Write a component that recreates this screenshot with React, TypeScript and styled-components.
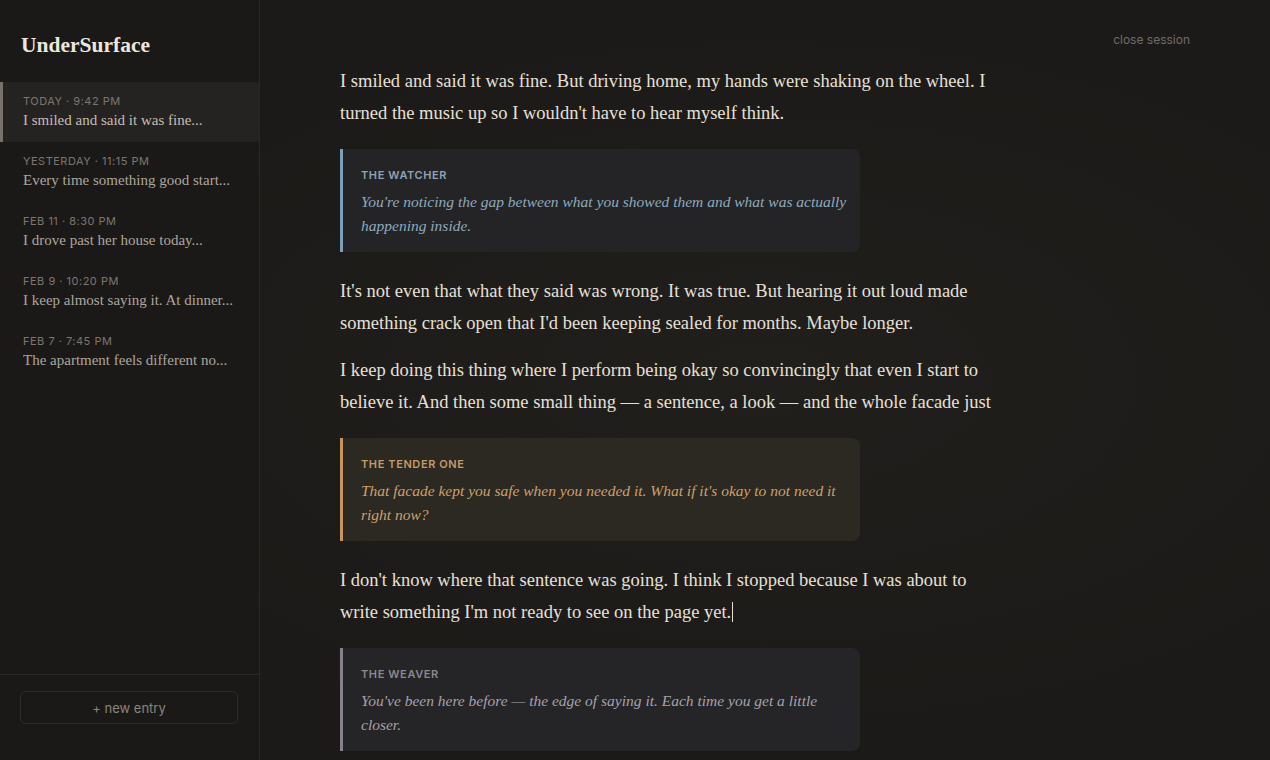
import React from 'react'
import styled, { createGlobalStyle } from 'styled-components'

const GlobalStyle = createGlobalStyle`
  html, body {
    margin: 0;
    padding: 0;
    background: #1d1b19;
  }
  * {
    box-sizing: border-box;
  }
`

type Voice = 'watcher' | 'tender' | 'weaver'

const voices: Record<Voice, { border: string; bg: string; label: string; text: string }> = {
  watcher: { border: '#7b9fb8', bg: '#242427', label: '#8fa3b3', text: '#8fa9bc' },
  tender: { border: '#c99558', bg: '#2c2822', label: '#c69a68', text: '#cda06c' },
  weaver: { border: '#858089', bg: '#252427', label: '#8c8890', text: '#a7a2aa' },
}

interface Entry {
  date: string
  preview: string
}

const entries: Entry[] = [
  { date: 'Today · 9:42 PM', preview: 'I smiled and said it was fine...' },
  { date: 'Yesterday · 11:15 PM', preview: 'Every time something good start...' },
  { date: 'Feb 11 · 8:30 PM', preview: 'I drove past her house today...' },
  { date: 'Feb 9 · 10:20 PM', preview: 'I keep almost saying it. At dinner...' },
  { date: 'Feb 7 · 7:45 PM', preview: 'The apartment feels different no...' },
]

const Shell = styled.div`
  display: flex;
  height: 760px;
  width: 1270px;
  overflow: hidden;
  background: radial-gradient(ellipse at 60% 50%, #211f1c 0%, #1c1a18 70%);
`

const Sidebar = styled.aside`
  width: 260px;
  flex-shrink: 0;
  display: flex;
  flex-direction: column;
  background: #1b1917;
  border-right: 1px solid #292725;
`

const Brand = styled.h1`
  margin: 0;
  padding: 31px 21px 23px;
  font-family: 'Liberation Serif', serif;
  font-size: 21.5px;
  font-weight: 600;
  line-height: 28px;
  color: #ece6de;
`

const EntryList = styled.nav`
  flex: 1;
  display: flex;
  flex-direction: column;
`

const EntryItem = styled.div<{ $active?: boolean }>`
  height: 60px;
  padding: 12px 20px 0 ${({ $active }) => ($active ? '20px' : '23px')};
  border-left: ${({ $active }) => ($active ? '3px solid #77716b' : 'none')};
  background: ${({ $active }) => ($active ? '#252321' : 'transparent')};
`

const EntryDate = styled.div`
  font-family: Inter, 'Liberation Sans', sans-serif;
  font-size: 11px;
  line-height: 14px;
  letter-spacing: 0.5px;
  text-transform: uppercase;
  color: #7b7670;
`

const EntryPreview = styled.div<{ $active?: boolean }>`
  margin-top: 2px;
  font-family: 'Liberation Serif', serif;
  font-size: 15px;
  line-height: 20px;
  color: ${({ $active }) => ($active ? '#c4bdb5' : '#aca69f')};
  white-space: nowrap;
  overflow: hidden;
`

const SidebarFooter = styled.div`
  border-top: 1px solid #2a2826;
  padding: 16px 21px 36px 20px;
`

const NewEntryButton = styled.button`
  width: 100%;
  height: 33px;
  background: transparent;
  border: 1px solid #2f2d2a;
  border-radius: 6px;
  font-family: Inter, 'Liberation Sans', sans-serif;
  font-size: 13px;
  color: #8a857f;
  cursor: pointer;
`

const Main = styled.main`
  flex: 1;
  display: flex;
  flex-direction: column;
  overflow: hidden;
`

const TopBar = styled.div`
  display: flex;
  flex-shrink: 0;
  justify-content: flex-end;
  padding: 32px 80px 0;
  height: 65px;
`

const CloseLink = styled.span`
  font-family: Inter, 'Liberation Sans', sans-serif;
  font-size: 12px;
  line-height: 16px;
  color: #6f6b66;
  cursor: pointer;
`

const Page = styled.div`
  flex-shrink: 0;
  padding: 0 0 0 80px;
  max-width: 740px;
`

const Paragraph = styled.p`
  margin: 0 0 15px;
  font-family: 'Liberation Serif', serif;
  font-size: 18.5px;
  line-height: 32px;
  color: #e6e0d7;
`

const Caret = styled.span`
  display: inline-block;
  width: 1px;
  height: 20px;
  margin-left: 1px;
  vertical-align: -4px;
  background: #e6e0d7;
`

const Card = styled.div<{ $voice: Voice }>`
  width: 520px;
  margin: 20px 0 23px;
  padding: 19px 12px 14px 18px;
  border-left: 3px solid ${({ $voice }) => voices[$voice].border};
  border-radius: 0 8px 8px 0;
  background: ${({ $voice }) => voices[$voice].bg};
`

const CardLabel = styled.div<{ $voice: Voice }>`
  font-family: Inter, 'Liberation Sans', sans-serif;
  font-size: 11px;
  font-weight: 600;
  line-height: 14px;
  letter-spacing: 0.6px;
  text-transform: uppercase;
  color: ${({ $voice }) => voices[$voice].label};
`

const CardText = styled.div<{ $voice: Voice }>`
  margin-top: 8px;
  font-family: 'Liberation Serif', serif;
  font-style: italic;
  font-size: 15.5px;
  line-height: 24px;
  color: ${({ $voice }) => voices[$voice].text};
`

const Reflection: React.FC<{ voice: Voice; name: string; children: React.ReactNode }> = ({ voice, name, children }) => (
  <Card $voice={voice}>
    <CardLabel $voice={voice}>{name}</CardLabel>
    <CardText $voice={voice}>{children}</CardText>
  </Card>
)

const App: React.FC = () => {
  return (
    <>
      <GlobalStyle />
      <Shell>
        <Sidebar>
          <Brand>UnderSurface</Brand>
          <EntryList>
            {entries.map((e, i) => (
              <EntryItem key={e.date} $active={i === 0}>
                <EntryDate>{e.date}</EntryDate>
                <EntryPreview $active={i === 0}>{e.preview}</EntryPreview>
              </EntryItem>
            ))}
          </EntryList>
          <SidebarFooter>
            <NewEntryButton>+ new entry</NewEntryButton>
          </SidebarFooter>
        </Sidebar>
        <Main>
          <TopBar>
            <CloseLink>close session</CloseLink>
          </TopBar>
          <Page>
            <Paragraph>
              I smiled and said it was fine. But driving home, my hands were shaking on the wheel. I turned the music up
              so I wouldn't have to hear myself think.
            </Paragraph>
            <Reflection voice="watcher" name="The Watcher">
              You're noticing the gap between what you showed them and what was actually happening inside.
            </Reflection>
            <Paragraph>
              It's not even that what they said was wrong. It was true. But hearing it out loud made something crack open
              that I'd been keeping sealed for months. Maybe longer.
            </Paragraph>
            <Paragraph>
              I keep doing this thing where I perform being okay so convincingly that even I start to believe it. And
              then some small thing — a sentence, a look — and the whole facade just
            </Paragraph>
            <Reflection voice="tender" name="The Tender One">
              That facade kept you safe when you needed it. What if it's okay to not need it right now?
            </Reflection>
            <Paragraph>
              I don't know where that sentence was going. I think I stopped because I was about to write something I'm
              not ready to see on the page yet.
              <Caret />
            </Paragraph>
            <Reflection voice="weaver" name="The Weaver">
              You've been here before — the edge of saying it. Each time you get a little closer.
            </Reflection>
          </Page>
        </Main>
      </Shell>
    </>
  )
}

export default App
